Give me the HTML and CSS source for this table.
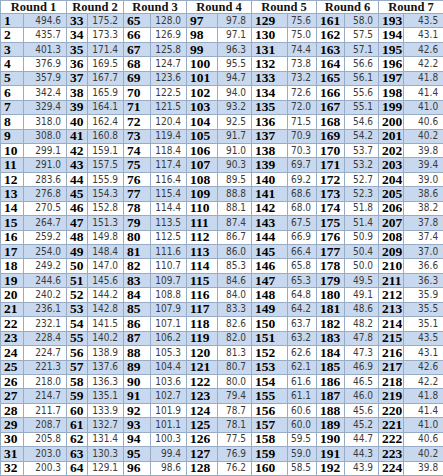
FILE: index.html
```html
<!DOCTYPE html>
<html>
<head>
<meta charset="utf-8">
<link rel="stylesheet" href="styles.css">
</head>
<body>
<table class="rounds">
<colgroup>
<col class="c1"><col class="c2"><col class="c3"><col class="c4"><col class="c5"><col class="c6"><col class="c7"><col class="c8"><col class="c9"><col class="c10"><col class="c11"><col class="c12"><col class="c13"><col class="c14">
</colgroup>
<thead>
<tr class="head"><th colspan="2">Round 1</th><th colspan="2">Round 2</th><th colspan="2">Round 3</th><th colspan="2">Round 4</th><th colspan="2">Round 5</th><th colspan="2">Round 6</th><th colspan="2">Round 7</th></tr>
</thead>
<tbody>
<tr><td class="n">1</td><td class="v">494.6</td><td class="n">33</td><td class="v">175.2</td><td class="n">65</td><td class="v">128.0</td><td class="n">97</td><td class="v">97.8</td><td class="n">129</td><td class="v">75.6</td><td class="n">161</td><td class="v">58.0</td><td class="n">193</td><td class="v">43.5</td></tr>
<tr><td class="n">2</td><td class="v">435.7</td><td class="n">34</td><td class="v">173.3</td><td class="n">66</td><td class="v">126.9</td><td class="n">98</td><td class="v">97.1</td><td class="n">130</td><td class="v">75.0</td><td class="n">162</td><td class="v">57.5</td><td class="n">194</td><td class="v">43.1</td></tr>
<tr><td class="n">3</td><td class="v">401.3</td><td class="n">35</td><td class="v">171.4</td><td class="n">67</td><td class="v">125.8</td><td class="n">99</td><td class="v">96.3</td><td class="n">131</td><td class="v">74.4</td><td class="n">163</td><td class="v">57.1</td><td class="n">195</td><td class="v">42.6</td></tr>
<tr><td class="n">4</td><td class="v">376.9</td><td class="n">36</td><td class="v">169.5</td><td class="n">68</td><td class="v">124.7</td><td class="n">100</td><td class="v">95.5</td><td class="n">132</td><td class="v">73.8</td><td class="n">164</td><td class="v">56.6</td><td class="n">196</td><td class="v">42.2</td></tr>
<tr><td class="n">5</td><td class="v">357.9</td><td class="n">37</td><td class="v">167.7</td><td class="n">69</td><td class="v">123.6</td><td class="n">101</td><td class="v">94.7</td><td class="n">133</td><td class="v">73.2</td><td class="n">165</td><td class="v">56.1</td><td class="n">197</td><td class="v">41.8</td></tr>
<tr><td class="n">6</td><td class="v">342.4</td><td class="n">38</td><td class="v">165.9</td><td class="n">70</td><td class="v">122.5</td><td class="n">102</td><td class="v">94.0</td><td class="n">134</td><td class="v">72.6</td><td class="n">166</td><td class="v">55.6</td><td class="n">198</td><td class="v">41.4</td></tr>
<tr><td class="n">7</td><td class="v">329.4</td><td class="n">39</td><td class="v">164.1</td><td class="n">71</td><td class="v">121.5</td><td class="n">103</td><td class="v">93.2</td><td class="n">135</td><td class="v">72.0</td><td class="n">167</td><td class="v">55.1</td><td class="n">199</td><td class="v">41.0</td></tr>
<tr><td class="n">8</td><td class="v">318.0</td><td class="n">40</td><td class="v">162.4</td><td class="n">72</td><td class="v">120.4</td><td class="n">104</td><td class="v">92.5</td><td class="n">136</td><td class="v">71.5</td><td class="n">168</td><td class="v">54.6</td><td class="n">200</td><td class="v">40.6</td></tr>
<tr><td class="n">9</td><td class="v">308.0</td><td class="n">41</td><td class="v">160.8</td><td class="n">73</td><td class="v">119.4</td><td class="n">105</td><td class="v">91.7</td><td class="n">137</td><td class="v">70.9</td><td class="n">169</td><td class="v">54.2</td><td class="n">201</td><td class="v">40.2</td></tr>
<tr><td class="n">10</td><td class="v">299.1</td><td class="n">42</td><td class="v">159.1</td><td class="n">74</td><td class="v">118.4</td><td class="n">106</td><td class="v">91.0</td><td class="n">138</td><td class="v">70.3</td><td class="n">170</td><td class="v">53.7</td><td class="n">202</td><td class="v">39.8</td></tr>
<tr><td class="n">11</td><td class="v">291.0</td><td class="n">43</td><td class="v">157.5</td><td class="n">75</td><td class="v">117.4</td><td class="n">107</td><td class="v">90.3</td><td class="n">139</td><td class="v">69.7</td><td class="n">171</td><td class="v">53.2</td><td class="n">203</td><td class="v">39.4</td></tr>
<tr><td class="n">12</td><td class="v">283.6</td><td class="n">44</td><td class="v">155.9</td><td class="n">76</td><td class="v">116.4</td><td class="n">108</td><td class="v">89.5</td><td class="n">140</td><td class="v">69.2</td><td class="n">172</td><td class="v">52.7</td><td class="n">204</td><td class="v">39.0</td></tr>
<tr><td class="n">13</td><td class="v">276.8</td><td class="n">45</td><td class="v">154.3</td><td class="n">77</td><td class="v">115.4</td><td class="n">109</td><td class="v">88.8</td><td class="n">141</td><td class="v">68.6</td><td class="n">173</td><td class="v">52.3</td><td class="n">205</td><td class="v">38.6</td></tr>
<tr><td class="n">14</td><td class="v">270.5</td><td class="n">46</td><td class="v">152.8</td><td class="n">78</td><td class="v">114.4</td><td class="n">110</td><td class="v">88.1</td><td class="n">142</td><td class="v">68.0</td><td class="n">174</td><td class="v">51.8</td><td class="n">206</td><td class="v">38.2</td></tr>
<tr><td class="n">15</td><td class="v">264.7</td><td class="n">47</td><td class="v">151.3</td><td class="n">79</td><td class="v">113.5</td><td class="n">111</td><td class="v">87.4</td><td class="n">143</td><td class="v">67.5</td><td class="n">175</td><td class="v">51.4</td><td class="n">207</td><td class="v">37.8</td></tr>
<tr><td class="n">16</td><td class="v">259.2</td><td class="n">48</td><td class="v">149.8</td><td class="n">80</td><td class="v">112.5</td><td class="n">112</td><td class="v">86.7</td><td class="n">144</td><td class="v">66.9</td><td class="n">176</td><td class="v">50.9</td><td class="n">208</td><td class="v">37.4</td></tr>
<tr><td class="n">17</td><td class="v">254.0</td><td class="n">49</td><td class="v">148.4</td><td class="n">81</td><td class="v">111.6</td><td class="n">113</td><td class="v">86.0</td><td class="n">145</td><td class="v">66.4</td><td class="n">177</td><td class="v">50.4</td><td class="n">209</td><td class="v">37.0</td></tr>
<tr><td class="n">18</td><td class="v">249.2</td><td class="n">50</td><td class="v">147.0</td><td class="n">82</td><td class="v">110.7</td><td class="n">114</td><td class="v">85.3</td><td class="n">146</td><td class="v">65.8</td><td class="n">178</td><td class="v">50.0</td><td class="n">210</td><td class="v">36.6</td></tr>
<tr><td class="n">19</td><td class="v">244.6</td><td class="n">51</td><td class="v">145.6</td><td class="n">83</td><td class="v">109.7</td><td class="n">115</td><td class="v">84.6</td><td class="n">147</td><td class="v">65.3</td><td class="n">179</td><td class="v">49.5</td><td class="n">211</td><td class="v">36.3</td></tr>
<tr><td class="n">20</td><td class="v">240.2</td><td class="n">52</td><td class="v">144.2</td><td class="n">84</td><td class="v">108.8</td><td class="n">116</td><td class="v">84.0</td><td class="n">148</td><td class="v">64.8</td><td class="n">180</td><td class="v">49.1</td><td class="n">212</td><td class="v">35.9</td></tr>
<tr><td class="n">21</td><td class="v">236.1</td><td class="n">53</td><td class="v">142.8</td><td class="n">85</td><td class="v">107.9</td><td class="n">117</td><td class="v">83.3</td><td class="n">149</td><td class="v">64.2</td><td class="n">181</td><td class="v">48.6</td><td class="n">213</td><td class="v">35.5</td></tr>
<tr><td class="n">22</td><td class="v">232.1</td><td class="n">54</td><td class="v">141.5</td><td class="n">86</td><td class="v">107.1</td><td class="n">118</td><td class="v">82.6</td><td class="n">150</td><td class="v">63.7</td><td class="n">182</td><td class="v">48.2</td><td class="n">214</td><td class="v">35.1</td></tr>
<tr><td class="n">23</td><td class="v">228.4</td><td class="n">55</td><td class="v">140.2</td><td class="n">87</td><td class="v">106.2</td><td class="n">119</td><td class="v">82.0</td><td class="n">151</td><td class="v">63.2</td><td class="n">183</td><td class="v">47.8</td><td class="n">215</td><td class="v">43.5</td></tr>
<tr><td class="n">24</td><td class="v">224.7</td><td class="n">56</td><td class="v">138.9</td><td class="n">88</td><td class="v">105.3</td><td class="n">120</td><td class="v">81.3</td><td class="n">152</td><td class="v">62.6</td><td class="n">184</td><td class="v">47.3</td><td class="n">216</td><td class="v">43.1</td></tr>
<tr><td class="n">25</td><td class="v">221.3</td><td class="n">57</td><td class="v">137.6</td><td class="n">89</td><td class="v">104.4</td><td class="n">121</td><td class="v">80.7</td><td class="n">153</td><td class="v">62.1</td><td class="n">185</td><td class="v">46.9</td><td class="n">217</td><td class="v">42.6</td></tr>
<tr><td class="n">26</td><td class="v">218.0</td><td class="n">58</td><td class="v">136.3</td><td class="n">90</td><td class="v">103.6</td><td class="n">122</td><td class="v">80.0</td><td class="n">154</td><td class="v">61.6</td><td class="n">186</td><td class="v">46.5</td><td class="n">218</td><td class="v">42.2</td></tr>
<tr><td class="n">27</td><td class="v">214.7</td><td class="n">59</td><td class="v">135.1</td><td class="n">91</td><td class="v">102.7</td><td class="n">123</td><td class="v">79.4</td><td class="n">155</td><td class="v">61.1</td><td class="n">187</td><td class="v">46.0</td><td class="n">219</td><td class="v">41.8</td></tr>
<tr><td class="n">28</td><td class="v">211.7</td><td class="n">60</td><td class="v">133.9</td><td class="n">92</td><td class="v">101.9</td><td class="n">124</td><td class="v">78.7</td><td class="n">156</td><td class="v">60.6</td><td class="n">188</td><td class="v">45.6</td><td class="n">220</td><td class="v">41.4</td></tr>
<tr><td class="n">29</td><td class="v">208.7</td><td class="n">61</td><td class="v">132.7</td><td class="n">93</td><td class="v">101.1</td><td class="n">125</td><td class="v">78.1</td><td class="n">157</td><td class="v">60.0</td><td class="n">189</td><td class="v">45.2</td><td class="n">221</td><td class="v">41.0</td></tr>
<tr><td class="n">30</td><td class="v">205.8</td><td class="n">62</td><td class="v">131.4</td><td class="n">94</td><td class="v">100.3</td><td class="n">126</td><td class="v">77.5</td><td class="n">158</td><td class="v">59.5</td><td class="n">190</td><td class="v">44.7</td><td class="n">222</td><td class="v">40.6</td></tr>
<tr><td class="n">31</td><td class="v">203.0</td><td class="n">63</td><td class="v">130.3</td><td class="n">95</td><td class="v">99.4</td><td class="n">127</td><td class="v">76.9</td><td class="n">159</td><td class="v">59.0</td><td class="n">191</td><td class="v">44.3</td><td class="n">223</td><td class="v">40.2</td></tr>
<tr><td class="n">32</td><td class="v">200.3</td><td class="n">64</td><td class="v">129.1</td><td class="n">96</td><td class="v">98.6</td><td class="n">128</td><td class="v">76.2</td><td class="n">160</td><td class="v">58.5</td><td class="n">192</td><td class="v">43.9</td><td class="n">224</td><td class="v">39.8</td></tr>
</tbody>
</table>
</body>
</html>
```

FILE: styles.css
```css
html, body {
  margin: 0;
  padding: 0;
  background: #ffffff;
}

.rounds {
  width: 443px;
  height: 476px;
  border-collapse: collapse;
  table-layout: fixed;
}

.c1 { width: 23px; }
.c2 { width: 43px; }
.c3 { width: 21px; }
.c4 { width: 36px; }
.c5 { width: 27px; }
.c6 { width: 36px; }
.c7 { width: 31px; }
.c8 { width: 34px; }
.c9 { width: 36px; }
.c10 { width: 29px; }
.c11 { width: 28px; }
.c12 { width: 34px; }
.c13 { width: 25px; }
.c14 { width: 40px; }

.rounds th,
.rounds td {
  border: 1px solid #98acc6;
  padding: 0;
  overflow: hidden;
  white-space: nowrap;
  line-height: 12px;
}

.head {
  height: 13px;
}

.head th {
  font-family: "Liberation Serif", serif;
  font-weight: bold;
  font-size: 12.5px;
  color: #111;
  text-align: center;
  background: #ffffff;
}

.rounds tbody tr {
  height: 14.45px;
}

.rounds tbody tr:nth-child(odd) td {
  background: #c8d9ef;
}

.n {
  font-family: "Liberation Serif", serif;
  font-weight: bold;
  font-size: 13.5px;
  color: #000;
  text-align: left;
  padding-left: 3px !important;
}

.v {
  font-family: "DejaVu Sans Condensed", "DejaVu Sans", sans-serif;
  font-stretch: condensed;
  font-size: 10px;
  color: #3a3a3a;
  text-align: right;
  padding-right: 5px !important;
}
```
